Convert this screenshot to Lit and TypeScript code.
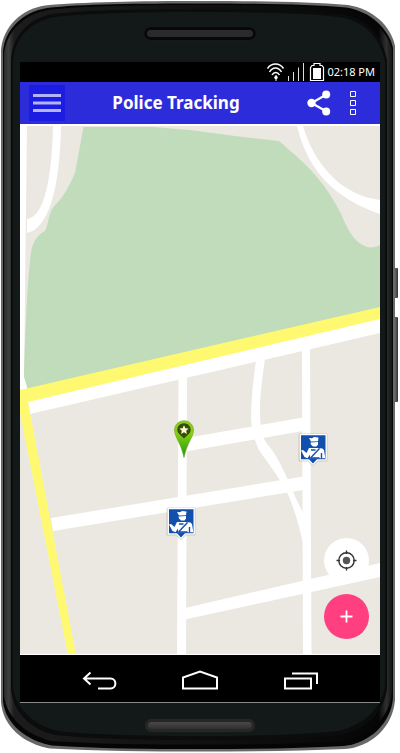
import { LitElement, html, css, svg } from "lit";
import { customElement } from "lit/decorators.js";

const MAP_W = 360;
const MAP_H = 531;

interface Pin {
  kind: "user" | "officer";
  label: string;
  x: number;
  y: number;
}

// Positions of each pin's tip in map units.
const PINS: Pin[] = [
  { kind: "user", label: "My position", x: 164, y: 334 },
  { kind: "officer", label: "Officer 1", x: 161, y: 416 },
  { kind: "officer", label: "Officer 2", x: 293, y: 342 },
];

@customElement("device-frame")
export class DeviceFrame extends LitElement {
  static styles = css`
    :host { display: flex; flex-direction: column; position: relative; min-height: 100vh; }
    .body { position: absolute; top: 0; left: 0; width: 100%; height: 100%; }
    .bezel { display: flex; align-items: center; justify-content: center; position: relative; box-sizing: border-box; }
    .top { height: 62px; padding-top: 4px; }
    .bottom { height: 50px; padding-bottom: 6px; }
    .speaker {
      width: 112px; height: 13px; box-sizing: border-box; border-radius: 7px;
      border: 3px solid #080808; background: #2b2b2b; box-shadow: 0 0 1px #333;
    }
    .bottom .speaker { width: 110px; border-color: #262626; background: linear-gradient(#484848, #303030); }
    .screen { position: relative; flex: 1; display: flex; flex-direction: column; margin: 0 20px; border-bottom: 1px solid #8a8a8a; }
  `;
  render() {
    return html`
      <svg class="body" viewBox="0 0 400 753" preserveAspectRatio="none" aria-hidden="true">
        <defs>
          <linearGradient id="rim" x1="0" x2="1" y1="0" y2="0">
            <stop offset="0" stop-color="#2a2a2a" />
            <stop offset="0.012" stop-color="#3e3e3e" />
            <stop offset="0.026" stop-color="#1c1c1c" />
            <stop offset="0.965" stop-color="#060606" />
            <stop offset="0.985" stop-color="#303030" />
            <stop offset="1" stop-color="#141414" />
          </linearGradient>
          <linearGradient id="key" x1="0" x2="1" y1="0" y2="0">
            <stop offset="0" stop-color="#777" />
            <stop offset="1" stop-color="#333" />
          </linearGradient>
        </defs>
        <rect x="394" y="268" width="4" height="30" rx="1" fill="url(#key)" />
        <rect x="394" y="317" width="4" height="85" rx="1" fill="url(#key)" />
        <path fill="#696969" d="M1 50 C3 26 22 9 45 5.500 C80 2 140 1 200 1 C260 1 310 2 348 5 C373 9 391 26 395 46 V700 C393 727 371 747 345 749 C300 751 250 751.500 200 751.500 C150 751.500 95 751 50 748.500 C24 744 3 727 1 702 Z" />
        <path fill="#050505" d="M3 51 C5 29 23 12 47 8 C80 4 140 3.500 200 3.500 C260 3.500 310 4.500 346 7.500 C370 11 389 29 393 48 V698 C391 724 369 743 344 746 C300 748.500 250 749 200 749 C150 749 95 748.500 52 745.500 C27 741 5 724 3 701 Z" />
        <path fill="url(#rim)" d="M4 54 C6 31 25 14 48 10 C80 6 140 5 200 5 C260 5 310 6 345 9 C368 13 388 31 392 50 V692 C390 718 367 738 343 741 C300 744 250 744.500 200 744.500 C150 744.500 95 744 52 741 C28 736 6 718 4 695 Z" />
        <path fill="#0b0d0d" d="M11 60 C12 36 28 19 52 14 C90 10 140 9 200 9 C260 9 308 10 342 14 C365 18 382 34 387 60 V688 C385 712 364 731 340 735 C300 739 250 740 200 740 C150 740 92 739 56 735 C32 731 13 712 11 690 Z" />
        <path fill="#131819" d="M13 62 C14 38 30 22 54 17 C90 13 140 12 200 12 C260 12 308 13 340 17 C363 21 380 36 385 62 V685 C383 708 362 726 338 731 C300 735 250 736 200 736 C150 736 92 735 58 731 C34 726 15 708 13 687 Z" />
      </svg>
      <div class="bezel top"><div class="speaker"></div></div>
      <div class="screen"><slot></slot></div>
      <div class="bezel bottom"><div class="speaker"></div></div>
    `;
  }
}

@customElement("status-bar")
export class StatusBar extends LitElement {
  static styles = css`
    :host {
      display: flex; align-items: center; justify-content: flex-end; gap: 2px; height: 20px;
      padding-right: 5px; background: #000; color: #fff; font: 11px/20px "Noto Sans", "Open Sans", sans-serif;
    }
    svg { display: block; height: 20px; }
    time { white-space: nowrap; }
  `;
  render() {
    return html`
      <svg width="58" height="20" viewBox="267 62 58 20" fill="none" stroke="#fff" aria-hidden="true">
        <g stroke-width="1.500">
          <path d="M267.500 68.500C271.500 62.500 279.500 62.500 283.500 68.500" />
          <path d="M269.500 72C272.500 66.500 278.500 66.500 281.500 72" />
          <path d="M272 75C274 71.500 277.500 71.500 279.500 75" />
        </g>
        <circle cx="276" cy="77.500" r="1.700" fill="#fff" stroke="none" />
        <path d="M276 75V81" />
        <path d="M288.500 76V81M293.500 72V81M298.500 67.500V81M303.500 63V81" stroke="#ddd" />
        <path d="M312 65.500H314V63.500H320V65.500H322L323.500 67.500V80.500H310.500V67.500Z" stroke-width="1.200" />
        <rect x="313" y="68" width="8" height="11" fill="#fff" stroke="none" />
      </svg>
      <time datetime="14:18">02:18 PM</time>
    `;
  }
}

@customElement("title-bar")
export class TitleBar extends LitElement {
  static styles = css`
    :host { display: flex; align-items: center; height: 42px; box-sizing: border-box; padding: 0 17px 0 9px; background: #2c2cda; }
    button { display: flex; align-items: center; justify-content: center; flex: none; height: 36px; padding: 0; border: 0; background: none; cursor: pointer; }
    svg { display: block; }
    .menu { width: 36px; background: #1d1de2; }
    .share { width: 48px; margin-left: 8px; }
    .more { width: 20px; }
    h1 { flex: 1; margin: 0; text-align: center; color: #fff; font: bold 17px/24px "Noto Sans", "Open Sans", sans-serif; white-space: nowrap; }
  `;
  render() {
    return html`
      <button class="menu" aria-label="Menu">
        <svg width="28" height="18" viewBox="0 0 28 18" fill="#b3b3fa"><path d="M0 0H28V3H0ZM0 7.500H28V10.500H0ZM0 15H28V18H0Z" /></svg>
      </button>
      <h1>Police Tracking</h1>
      <button class="share" aria-label="Share">
        <svg width="24" height="26" viewBox="0 0 24 26" fill="#fff">
          <path d="M19.500 4.500L4.500 13L19.500 21.500" fill="none" stroke="#fff" stroke-width="2.200" />
          <circle cx="19.200" cy="4.500" r="4" /><circle cx="4.500" cy="13" r="4.200" /><circle cx="19.200" cy="21.500" r="4" />
        </svg>
      </button>
      <button class="more" aria-label="More options">
        <svg width="6" height="24" viewBox="0 0 6 24" fill="none" stroke="#fff"><path d="M.5 .5H5.500V5.500H.5ZM.5 9.500H5.500V14.500H.5ZM.5 18.500H5.500V23.500H.5Z" /></svg>
      </button>
    `;
  }
}

@customElement("city-map")
export class CityMap extends LitElement {
  static styles = css`
    :host { display: block; position: relative; flex: 1; min-height: 320px; overflow: hidden; background: #ebe8e2; }
    .ground { position: absolute; top: 0; left: 0; width: 100%; height: 100%; }
    button { display: flex; align-items: center; justify-content: center; padding: 0; border: 0; cursor: pointer; }
    .pin { position: absolute; transform: translate(-50%, -100%); background: none; }
    .pin svg { display: block; }
    .actions { position: absolute; right: 11px; bottom: 16px; display: grid; gap: 11px; }
    .action { width: 45px; height: 45px; border-radius: 50%; background: #fff; }
    .add { background: #ff3f80; }
  `;

  private userIcon() {
    return svg`
      <svg width="22" height="38" viewBox="0 0 22 38">
        <defs>
          <linearGradient id="leaf" x1="0" x2="0" y1="0" y2="1">
            <stop offset="0" stop-color="#92c921" /><stop offset="0.350" stop-color="#86cf10" /><stop offset="1" stop-color="#1f9415" />
          </linearGradient>
        </defs>
        <path d="M11 .8C5.500 .8 1.500 5 1.500 10.200C1.500 17 8 23 11 37.500C14 23 20.500 17 20.500 10.200C20.500 5 16.500 .8 11 .8Z" fill="url(#leaf)" stroke="#6da51c" stroke-width=".6" />
        <path d="M11 3.200C7.200 3.200 4.300 6 4.300 9.800C4.300 13.800 8.500 15.500 11 18.500C13.500 15.500 17.700 13.800 17.700 9.800C17.700 6 14.800 3.200 11 3.200Z" fill="#354e0b" />
        <path d="M11 5.200L12.400 8.200L15.600 8.500L13.200 10.700L13.900 14L11 12.300L8.100 14L8.800 10.700L6.400 8.500L9.600 8.200Z" fill="#fffbd2" />
      </svg>`;
  }

  private officerIcon() {
    return svg`
      <svg width="32" height="36" viewBox="0 0 32 36">
        <path d="M3 3.500H29.500Q30.500 3.500 30.500 5V30Q30.500 31.500 29.500 31.500H21L16 36L11 31.500H3Q1.500 31.500 1.500 30V5Q1.500 3.500 3 3.500Z" fill="#9b9b9b" opacity=".4" />
        <path d="M3.500 4H29Q29.800 4 29.800 5V29.500Q29.800 30.500 29 30.500H20.500L16 35L11.500 30.500H3.500Q2.700 30.500 2.700 29.500V5Q2.700 4 3.500 4Z" fill="#fff" />
        <path d="M4 5.300H28.500V29.300H20L16 33.500L12 29.300H4Z" fill="#1350ae" />
        <path d="M12 8L15 8.300L17 7L21.500 7.500L21 11.300L14 11.500Z" fill="#fff" />
        <path d="M13.500 12.500L21 12V14.500L19.500 16.500H16L14 14.500Z" fill="#fff" />
        <path d="M12 18H20L25.500 18.500L27 20L28.300 28.300H13V24.500L10.500 28.300L7.500 27L4 20.500L6 20L9.500 23Z" fill="#fff" />
        <path d="M14 20H18.500M22.500 18.500L13.500 28M13.500 28H22.500M24.500 23V28.500" fill="none" stroke="#1350ae" stroke-width="1.400" />
      </svg>`;
  }

  render() {
    return html`
      <svg class="ground" viewBox="20 124 360 531" preserveAspectRatio="none" aria-hidden="true">
        <rect x="20" y="124" width="360" height="531" fill="#ebe8e2" />
        <path fill="#fff" d="M20 124H380V126H27L24 376L29 392H20Z" />
        <path fill="#c1dcba" d="M83.500 127H153L190 130L235 136L279 141Q283 144 288 149C310 167 328 187 341 214C348 230 355 245 370 247.500Q375 247.500 380 245V310L28 390L24 377C25 340 27 285 31 252C33 240 39 234 45 231C49 224 48 211 56 204C64 197 70 184 75 173Z" />
        <path fill="#fff" d="M53 126C52 175 45 217 27 219V233C48 229 60 190 61 126Z" />
        <path fill="#fff" d="M297 126C308 172 335 198 380 214V200C340 195 314 163 303 126Z" />
        <path fill="#fff" d="M28 401L380 318V333L30 414Z" />
        <path fill="#fff" d="M178.500 376H187L186 655H177Z" />
        <path fill="#fff" d="M302 348H310L311.500 655H303Z" />
        <path fill="#fff" d="M256 361C253 380 251 400 251 418C252 430 253 437 259 450C265 459 274 470 284 487C292 500 299 525 303 543V513C298 503 293 491 287 478C282 467 276 454 268 445C261 437 260 425 260 410C260 392 263 375 265 358Z" />
        <path fill="#fff" d="M186 438L303 417.500V431L186 451.500Z" />
        <path fill="#fff" d="M51 518L303 476.500V490L53 531Z" />
        <path fill="#fff" d="M185 608L380 563V577L185 619.500Z" />
        <path fill="#fff971" d="M20 390L380 307V319L28 402L76 655H68L20 413Z" />
        <path fill="#fff" d="M20 654H380V655H20Z" />
      </svg>
      ${PINS.map(
        (p) => html`<button
          class="pin"
          aria-label=${p.label}
          style="left:${(p.x / MAP_W) * 100}%;top:${(p.y / MAP_H) * 100}%"
        >${p.kind === "user" ? this.userIcon() : this.officerIcon()}</button>`
      )}
      <div class="actions">
        <button class="action" aria-label="Locate me">
          <svg width="21" height="21" viewBox="0 0 21 21" fill="none" stroke="#333" stroke-width="1.400">
            <circle cx="10.500" cy="10.500" r="7.700" /><path d="M10.500 .5V4M10.500 17V20.500M.5 10.500H4M17 10.500H20.500" />
            <circle cx="10.500" cy="10.500" r="3.700" fill="#555" stroke="none" />
          </svg>
        </button>
        <button class="action add" aria-label="Add">
          <svg width="13" height="13" viewBox="0 0 13 13" stroke="#fff" stroke-width="1.800"><path d="M6.500 .5V12.500M.5 6.500H12.500" /></svg>
        </button>
      </div>
    `;
  }
}

@customElement("nav-keys")
export class NavKeys extends LitElement {
  static styles = css`
    :host { display: flex; align-items: center; justify-content: center; gap: 40px; height: 47px; background: #000; }
    button { display: flex; align-items: center; justify-content: center; width: 60px; height: 40px; padding: 0; border: 0; background: none; cursor: pointer; }
    svg { display: block; }
  `;
  render() {
    return html`
      <button aria-label="Back">
        <svg width="36" height="24" viewBox="0 0 36 24" fill="none" stroke="#fff" stroke-width="2"><path d="M8.500 5.500L2 11.500L8.500 17.500M2 11.500H28.500C35 11.500 35 21.500 28.500 21.500H16" /></svg>
      </button>
      <button aria-label="Home">
        <svg width="36" height="24" viewBox="0 0 36 24" fill="none" stroke="#fff" stroke-width="2"><path d="M1 21.500V10.500L18 4.500L35 10.500V21.500Z" /></svg>
      </button>
      <button aria-label="Recent apps">
        <svg width="36" height="24" viewBox="0 0 36 24" fill="none" stroke="#fff" stroke-width="2"><path d="M3 11.500H29V21.500H3ZM10 6.500H35V17" /></svg>
      </button>
    `;
  }
}

@customElement("app-root")
export class AppRoot extends LitElement {
  static styles = css`
    :host { display: block; background: #fff; }
  `;
  render() {
    return html`
      <device-frame>
        <status-bar></status-bar>
        <title-bar></title-bar>
        <city-map></city-map>
        <nav-keys></nav-keys>
      </device-frame>
    `;
  }
}
